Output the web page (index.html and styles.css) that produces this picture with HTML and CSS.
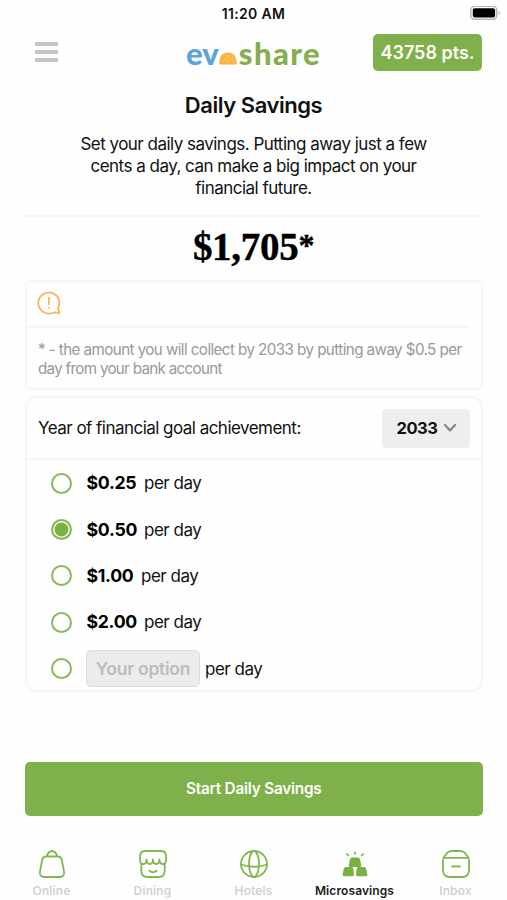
FILE: index.html
```html
<!DOCTYPE html>
<html lang="en">
<head>
<meta charset="utf-8">
<title>Daily Savings</title>
<link rel="stylesheet" href="styles.css">
</head>
<body>
<div class="app">
  <div class="status">
    <span class="time">11:20 AM</span>
    <svg class="battery" width="31" height="15" viewBox="0 0 31 15"><rect x=".8" y=".3" width="26" height="13" rx="4" fill="#fff" stroke="#b5b5b5" stroke-width="1.5"/><rect x="2.8" y="2.2" width="22.3" height="9.2" rx="2" fill="#000"/><path d="M28.800 4.500q2 2.500 0 5z" fill="#b5b5b5"/></svg>
  </div>
  <header class="header">
    <div class="menu"><i></i><i></i><i></i></div>
    <div class="logo"><span class="ev">ev</span><svg width="18" height="13" viewBox="0 0 18 13"><path d="M.3 12.400C-.2 5 3.800.5 9 .5s9.200 4.500 8.700 11.900z" fill="#fbb040"/><path d="M3.500 9.500 11 3M8 10.500l6.500-5.500M12.500 11l3.500-3" stroke="#fdd28c" fill="none"/></svg><span class="share">share</span></div>
    <div class="points">43758 pts.</div>
  </header>
  <h1>Daily Savings</h1>
  <p class="intro">Set your daily savings. Putting away just a few<br>cents a day, can make a big impact on your<br>financial future.</p>
  <div class="amount">$1,705<span class="star">*</span></div>
  <section class="note">
    <div class="note-head"><svg width="24" height="24" viewBox="0 0 24 24" fill="none" stroke="#fab350" stroke-width="1.700" stroke-linecap="round" stroke-linejoin="round"><path d="M14.500 22.200A10.500 10.500 0 1 1 21 17.200L22.300 22.500 18.500 21.200Q16.800 22.300 14.500 22.200Z"/><path d="M11.900 6.500v6.700M11.900 16.800v.2"/></svg></div>
    <p><span class="tight">* - the amount you will collect by 2033 by putting away $0.5 per</span><br>day from your bank account</p>
  </section>
  <section class="goal">
    <div class="goal-head"><span>Year of financial goal achievement:</span><div class="year"><b>2033</b><svg width="14" height="10" viewBox="0 0 14 10" fill="none" stroke="#858585" stroke-width="2.200" stroke-linecap="round" stroke-linejoin="round"><path d="M2 2l5 5.400L12 2"/></svg></div></div>
    <div class="option"><i class="radio"></i><div class="choice"><b>$0.25</b><span>per day</span></div></div>
    <div class="option"><i class="radio on"></i><div class="choice"><b>$0.50</b><span>per day</span></div></div>
    <div class="option"><i class="radio"></i><div class="choice"><b class="narrow">$1.00</b><span>per day</span></div></div>
    <div class="option"><i class="radio"></i><div class="choice"><b>$2.00</b><span>per day</span></div></div>
    <div class="option"><i class="radio"></i><div class="choice"><div class="field">Your option</div><span>per day</span></div></div>
  </section>
  <div class="start">Start Daily Savings</div>
  <nav class="tabs">
    <div class="tab"><svg viewBox="0 0 28 28"><path d="M8 6.500h12q3 0 3.700 3l2.200 11.500q1.200 6-4.400 6h-15q-5.600 0-4.400-6L4.300 9.500q.7-3 3.700-3zM8.500 6.500Q10.500 1 14 1t5.500 5.500"/></svg><span>Online</span></div>
    <div class="tab"><svg viewBox="0 0 28 28"><path d="M6 1h16q5 0 5 5.500V10.500q0 3.500-3.300 3.500-3.300 0-3.300-4.500 0 4.500-3.200 4.500T14 9.500q0 4.500-3.200 4.500T7.600 9.500Q7.600 14 4.300 14 1 14 1 10.500V6.500Q1 1 6 1zM2.300 13.800V21q0 6 6 6h11.400q6 0 6-6v-7.200M10.500 20.800q3.500 3 7 0"/></svg><span>Dining</span></div>
    <div class="tab"><svg viewBox="0 0 28 28"><circle cx="14" cy="14" r="13"/><path d="M13 1Q9 5 9 14t4 13M15 1q4 4 4 13t-4 13M1 14.500q13 4.500 26 0"/></svg><span>Hotels</span></div>
    <div class="tab active"><svg viewBox="0 0 28 28"><g class="fill"><path d="M11.200 7.500h5.600q1.800 0 2.200 1.600l1.200 6q.4 2-1.400 2H9.200q-1.800 0-1.400-2L9 9.100q.4-1.600 2.200-1.600zM5 17h5.500q1.700 0 1.900 1.500l.6 5.700q.2 2-1.600 2H3.200q-2 0-1.600-2l1.300-5.700Q3.300 17 5 17zM17.500 17H23q1.700 0 2.100 1.500l1.300 5.700q.4 2-1.600 2h-8.200q-1.800 0-1.600-2l.6-5.700q.2-1.500 1.900-1.500z"/></g><path d="M6 4l1.300 1.500M14 2.500v1.300M22 4l-1.300 1.500"/></svg><span>Microsavings</span></div>
    <div class="tab"><svg viewBox="0 0 28 28"><path d="M1 10.500Q1 7.500 3 5.500L5.500 2.700Q7 1 9.500 1h9Q21 1 22.500 2.700L25 5.500q2 2 2 5V20q0 7-7 7H8q-7 0-7-7zM1.800 7.800h24.400M10 16.500h8"/></svg><span>Inbox</span></div>
  </nav>
</div>
</body>
</html>
```
FILE: styles.css
```css
* { box-sizing: border-box; }
body { margin: 0; background: #fff; color: #111; font-family: Inter, "Liberation Sans", sans-serif; }
.app { width: 507px; height: 900px; overflow: hidden; display: flex; flex-direction: column; background: #fefefe; }
h1, p { margin: 0; }
svg { display: block; flex: none; }
.status { height: 28px; flex: none; display: grid; grid-template-columns: 1fr auto 1fr; align-items: center; padding: 0 6px 1px 6px; }
.time { grid-column: 2; font-size: 14px; font-weight: 600; letter-spacing: .35px; }
.battery { justify-self: end; }
.header { height: 48px; flex: none; display: grid; grid-template-columns: 109px 1fr 109px; align-items: center; padding: 0 25px; }
.menu { width: 23px; margin-left: 10px; display: flex; flex-direction: column; gap: 4px; }
.menu i { height: 4px; background: #c4c4c4; }
.logo { display: flex; align-items: baseline; justify-content: center; font-family: Lato, sans-serif; font-size: 31px; font-weight: 900; line-height: 36px; padding-top: 1px; }
.ev { color: #5ba5dc; }
.share { color: #87ad4c; letter-spacing: 1.4px; margin-left: 2px; }
.points { height: 37px; border-radius: 5px; background: #80b04b; color: #fff; font-size: 18px; font-weight: 600; line-height: 37px; text-align: center; white-space: nowrap; }
h1 { height: 57px; padding-top: 14px; flex: none; font-size: 22px; line-height: 30px; font-weight: 600; text-align: center; letter-spacing: -.45px; }
.intro { flex: none; height: 84px; margin: 0 25px; border-bottom: 2px solid #f6f6f6; font-size: 17px; line-height: 22px; text-align: center; letter-spacing: -.52px; white-space: nowrap; }
.amount { flex: none; height: 63px; font-family: "Liberation Serif", serif; font-weight: 700; font-size: 39px; line-height: 60px; text-align: center; color: #000; letter-spacing: -.3px; -webkit-text-stroke: .4px #000; }
.star { font-size: 32px; line-height: 1; vertical-align: 4px; }
.note { flex: none; height: 110px; margin: 0 24.5px 0 25px; border: 2px solid #f6f6f6; border-radius: 6px; }
.note-head { height: 46px; margin-right: 12px; padding: 9px 0 0 10px; border-bottom: 2px solid #f6f6f6; }
.note p { padding: 12px 0 0 11px; font-size: 15.2px; line-height: 19px; color: #999; letter-spacing: -.7px; white-space: nowrap; }
.tight { letter-spacing: -.58px; }
.goal { flex: none; height: 296px; margin: 6px 24.5px 0 25px; border: 2px solid #f6f6f6; border-radius: 12px; }
.goal-head { height: 62px; display: flex; align-items: center; justify-content: space-between; padding: 0 11px 0 11px; border-bottom: 2px solid #f6f6f6; font-size: 17px; letter-spacing: -.53px; white-space: nowrap; }
.year { width: 88px; height: 39px; display: flex; align-items: center; gap: 6px; padding-left: 15px; border-radius: 4px; background: #eee; letter-spacing: -.5px; }
.year b { width: 40px; font-size: 16.5px; }
.option { height: 46.4px; display: flex; align-items: center; padding-left: 24px; font-size: 17px; letter-spacing: -.5px; white-space: nowrap; color: #111; }
.choice { flex: 1; height: 100%; display: flex; align-items: center; margin-left: 8px; padding-left: 6px; border-bottom: 1px solid #fafafa; }
.choice span { padding-top: 1px; }
.option:last-child .choice { border-bottom: 0; }
.option b { width: 51px; margin-right: 7px; font-size: 17.7px; letter-spacing: -.3px; color: #000; padding-left: .5px; }
.option .narrow { width: 48px; }
.radio { flex: none; width: 21px; height: 21px; border: 2px solid #88b95a; border-radius: 50%; }
.radio.on { background: #7ab23f; box-shadow: inset 0 0 0 1.5px #fff; }
.field { width: 114px; height: 37px; margin-right: 5px; border: 1px solid #ddd; border-radius: 5px; background: #ececec; color: #bcbcbc; font-size: 17.5px; font-weight: 600; line-height: 35px; text-align: center; letter-spacing: -.25px; }
.start { flex: none; height: 54px; margin: 70px 24.5px 0 25px; border-radius: 5px; background: #80b04b; color: #fff; font-size: 15.3px; font-weight: 600; line-height: 54px; text-align: center; letter-spacing: -.2px; }
.tabs { flex: none; display: grid; grid-template-columns: repeat(5, 101px); margin: 34px 0 0 1px; }
.tab { display: flex; flex-direction: column; align-items: center; gap: 5px; color: #cdcdcd; font-size: 12px; line-height: 15px; font-weight: 500; letter-spacing: .2px; }
.tab svg { width: 28px; height: 28px; fill: none; stroke: #83b653; stroke-width: 1.8; stroke-linecap: round; stroke-linejoin: round; }
.tab .fill { fill: #78b043; stroke: none; }
.tab.active { color: #1c1c1c; font-weight: 600; letter-spacing: .1px; }
```
